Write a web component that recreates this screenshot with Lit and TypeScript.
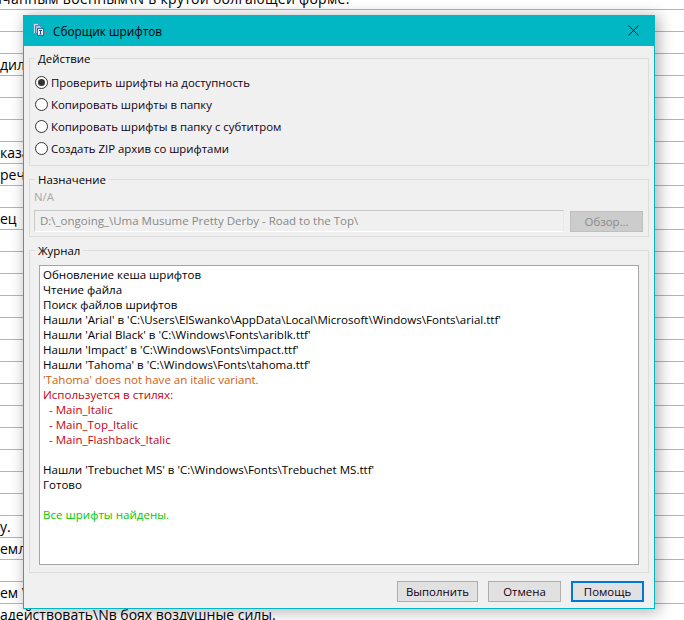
import { LitElement, html, css } from "lit";
import { customElement } from "lit/decorators.js";

const LOG: [string, string][] = [
  ["Обновление кеша шрифтов", ""],
  ["Чтение файла", ""],
  ["Поиск файлов шрифтов", ""],
  ["Нашли 'Arial' в 'C:\\Users\\ElSwanko\\AppData\\Local\\Microsoft\\Windows\\Fonts\\arial.ttf'", ""],
  ["Нашли 'Arial Black' в 'C:\\Windows\\Fonts\\ariblk.ttf'", ""],
  ["Нашли 'Impact' в 'C:\\Windows\\Fonts\\impact.ttf'", ""],
  ["Нашли 'Tahoma' в 'C:\\Windows\\Fonts\\tahoma.ttf'", ""],
  ["'Tahoma' does not have an italic variant.", "warn"],
  ["Используется в стилях:", "err"],
  ["  - Main_Italic", "err"],
  ["  - Main_Top_Italic", "err"],
  ["  - Main_Flashback_Italic", "err"],
  ["\u00a0", ""],
  ["Нашли 'Trebuchet MS' в 'C:\\Windows\\Fonts\\Trebuchet MS.ttf'", ""],
  ["Готово", ""],
  ["\u00a0", ""],
  ["Все шрифты найдены.", "ok"],
];

const ROWS: Record<number, string> = {
  0: "ачанным военным\\N в крутой болгающей форме.",
  3: "дил",
  7: "каза",
  8: "реч",
  10: "ец",
  24: "у.",
  25: "емл",
  27: "ем \\",
  28: "адействовать\\Nв боях воздушные силы.",
};

const OPTIONS = [
  "Проверить шрифты на доступность",
  "Копировать шрифты в папку",
  "Копировать шрифты в папку с субтитром",
  "Создать ZIP архив со шрифтами",
];

@customElement("app-root")
export class AppRoot extends LitElement {
  static styles = css`
    :host {
      display: block;
      position: relative;
      width: 684px;
      height: 620px;
      overflow: hidden;
      background: #fff;
      font-family: "Open Sans", "Noto Sans", sans-serif;
      font-size: 11.4px;
      color: #000;
    }
    .rows { display: flex; flex-direction: column; margin-top: -12px; }
    .row {
      box-sizing: border-box;
      height: 22px;
      border-bottom: 1px solid #b4b4b4;
      font-size: 14px;
      line-height: 21px;
      white-space: nowrap;
      flex: none;
    }
    .row.first span { display: inline-block; margin-left: -6px; letter-spacing: 0.3px; }
    .dialog {
      position: absolute;
      left: 23px;
      top: 15px;
      width: 632px;
      height: 594px;
      box-sizing: border-box;
      border: 1px solid #00b7c3;
      border-top: 0;
      background: #f0f0f0;
      box-shadow: 3px 2px 14px 1px rgba(0,0,0,.3);
      display: flex;
      flex-direction: column;
    }
    .title {
      height: 31px;
      margin: 0 -1px;
      background: #00b7c3;
      display: flex;
      align-items: center;
      flex: none;
      padding-left: 9px;
    }
    .title svg.app { margin-right: 5px; }
    .title .t { font-size: 11.8px; flex: 1; color: #000; }
    .close { width: 46px; display: flex; justify-content: center; margin-right: -1px; }
    .body { padding: 12px 5px 0 5px; display: flex; flex-direction: column; flex: 1; }
    .group {
      position: relative;
      box-sizing: border-box;
      border: 1px solid #dcdcdc;
    }
    .legend {
      position: absolute;
      left: 5px;
      top: -9px;
      padding: 0 3px;
      background: #f0f0f0;
      line-height: 17px;
    }
    .g1 { height: 108px; padding: 14px 0 0 5px; display: flex; flex-direction: column; gap: 4px; }
    .opt { display: flex; align-items: center; gap: 3px; height: 18px; white-space: nowrap; color: #100010; }
    .radio {
      width: 13px; height: 13px; box-sizing: border-box;
      border: 1px solid #333; border-radius: 50%;
      background: #fff; display: flex; align-items: center; justify-content: center;
    }
    .radio.on::after { content: ""; width: 7px; height: 7px; border-radius: 50%; background: #333; }
    .g2 { margin-top: 13px; height: 58px; padding: 9px 5px 0 4px; }
    .na { color: #a8a8a8; line-height: 15px; height: 15px; }
    .dest { display: flex; gap: 6px; margin-top: 6px; align-items: flex-start; }
    .input {
      width: 530px; height: 22px; box-sizing: border-box;
      border: 1px solid #c8c8c8; border-right-color: #e8e8e8; border-bottom-color: #fff;
      padding-left: 5px; color: #888; line-height: 20px; white-space: nowrap; background: #f0f0f0;
      font-size: 11.5px;
    }
    .browse {
      width: 73px; height: 21px; box-sizing: border-box; margin-top: 1px;
      background: #cccccc; border: 1px solid #bfbfbf; color: #8a8a8a;
      display: flex; align-items: center; justify-content: center;
    }
    .g3 { margin-top: 13px; height: 323px; padding: 14px 9px 0 9px; }
    .log {
      height: 300px; box-sizing: border-box;
      border: 1px solid #a5a5a5; background: #fff;
      padding: 1px 0 0 3px;
      line-height: 15px; font-size: 11.55px; white-space: pre;
    }
    .warn { color: #d06010; }
    .err { color: #c80010; }
    .ok { color: #00c800; }
    .btns { display: flex; justify-content: flex-end; gap: 10px; padding: 8px 5px 0 0; }
    .btn {
      height: 21px; box-sizing: border-box;
      background: #e1e1e1; border: 1px solid #adadad;
      display: flex; align-items: center; justify-content: center; color: #100010;
    }
    .b1 { width: 81px; }
    .b2 { width: 73px; }
    .b3 { width: 73px; border: 2px solid #0078d7; }
  `;

  render() {
    const rows = [];
    for (let i = 0; i < 30; i++) {
      rows.push(html`<div class="row ${i === 0 ? "first" : ""}"><span>${ROWS[i] ?? ""}</span></div>`);
    }
    return html`
      <div class="rows">${rows}</div>
      <div class="dialog">
        <div class="title">
          <svg class="app" width="16" height="16" viewBox="0 0 16 16">
            <path d="M1.5 .5h4l2 2v8h-6z" fill="#c9d8ee" stroke="#6f8fc0"/>
            <path d="M3.5 2.5h4l2 2v6h-6z" fill="#a9c2e6" stroke="#5a80bb"/>
            <rect x="5.5" y="5.5" width="6" height="7" fill="#f4f8ff" stroke="#2f66b5"/>
            <path d="M7 7.5h3M8.5 7.5v3.5M7.5 11h2" stroke="#1a4fa0" stroke-width="1" fill="none"/>
            <path d="M12 9.5h3" stroke="#6a8a96" stroke-width="1.4"/>
          </svg>
          <span class="t">Сборщик шрифтов</span>
          <div class="close">
            <svg width="11" height="11" viewBox="0 0 11 11"><path d="M.5.5l10 10M10.5.5l-10 10" stroke="#000" stroke-width="1" fill="none"/></svg>
          </div>
        </div>
        <div class="body">
          <div class="group g1">
            <div class="legend">Действие</div>
            ${OPTIONS.map((o, i) => html`<div class="opt"><span class="radio ${i === 0 ? "on" : ""}"></span><span>${o}</span></div>`)}
          </div>
          <div class="group g2">
            <div class="legend">Назначение</div>
            <div class="na">N/A</div>
            <div class="dest">
              <div class="input">D:\\_ongoing_\\Uma Musume Pretty Derby - Road to the Top\\</div>
              <div class="browse">Обзор...</div>
            </div>
          </div>
          <div class="group g3">
            <div class="legend">Журнал</div>
            <div class="log">${LOG.map(([t, c]) => html`<div class=${c}>${t}</div>`)}</div>
          </div>
          <div class="btns">
            <div class="btn b1">Выполнить</div>
            <div class="btn b2">Отмена</div>
            <div class="btn b3">Помощь</div>
          </div>
        </div>
      </div>
    `;
  }
}
